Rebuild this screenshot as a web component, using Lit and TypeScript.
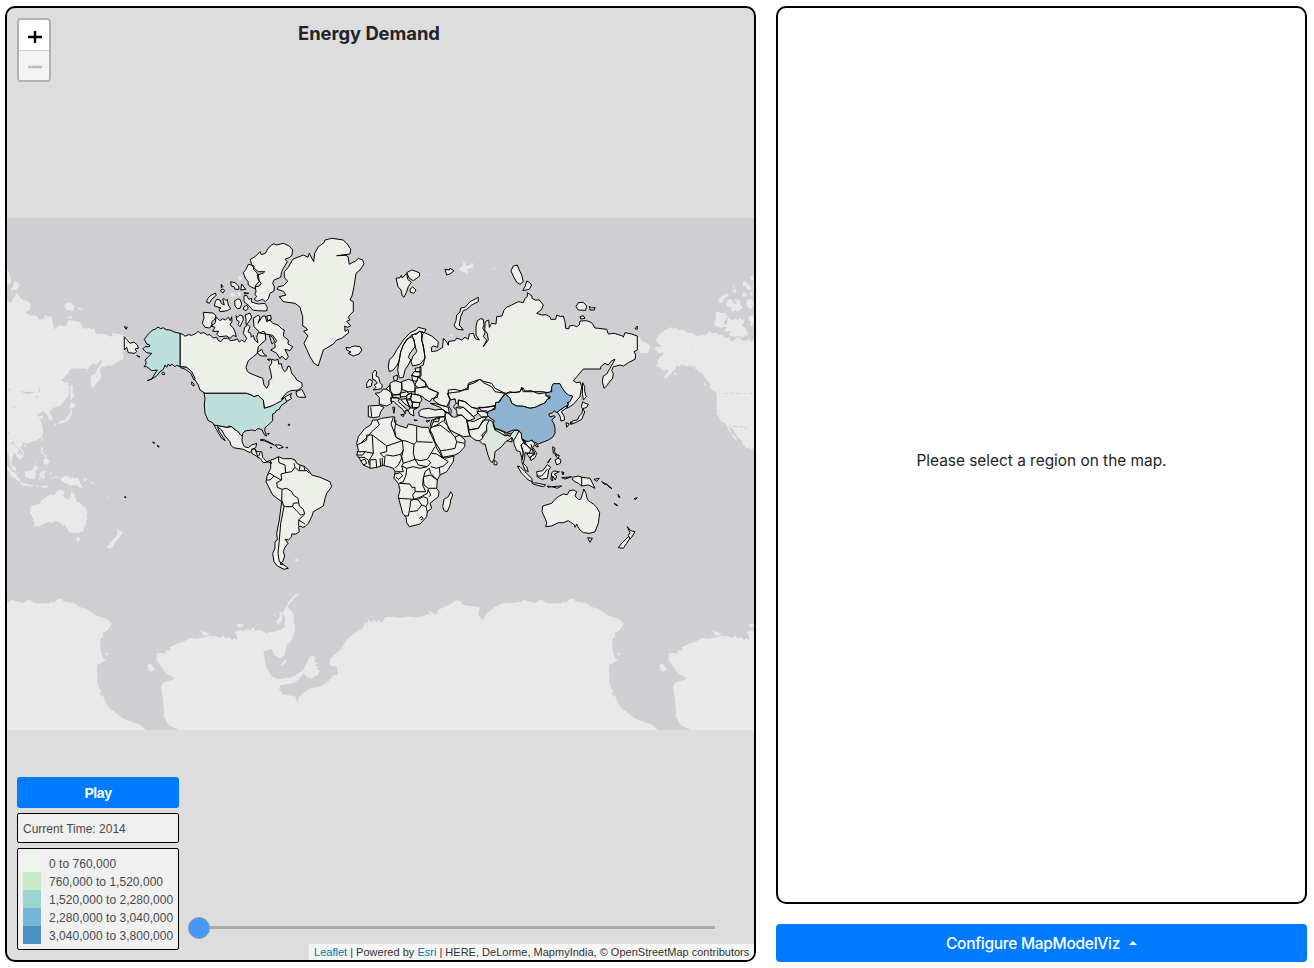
import { LitElement, html, svg, css } from "lit";
import { customElement, property } from "lit/decorators.js";

// Map sheets: each one is an origin on the map; coordinates are in thirds of a pixel.
const SHEETS: Record<string, [number, number]> = {
  a: [120, 230], b: [240, 230], c: [340, 320], d: [440, 250], e: [340, 400],
  f: [460, 370], g: [180, 380], h: [0, 570], i: [370, 570],
};

// `rough` adds small, repeatable notches to long edges, so coasts look natural.
function trace(src: string, close = true, rough = 0): string {
  let o = SHEETS.a;
  let out = "";
  for (const part of src.split(";")) {
    let px = NaN;
    let py = NaN;
    for (const t of part.trim().split(/\s+/)) {
      if (SHEETS[t]) { o = SHEETS[t]; continue; }
      if (!t) continue;
      const [tx, ty] = t.split(",").map(Number);
      const x = o[0] + tx / 3;
      const y = o[1] + ty / 3;
      if (Number.isNaN(px)) {
        out += `M${x.toFixed(1)} ${y.toFixed(1)}`;
      } else {
        const len = Math.hypot(x - px, y - py);
        const n = rough ? Math.floor(len / 1.6) : 0;
        for (let k = 1; k < n; k++) {
          const f = k / n;
          const bx = px + (x - px) * f;
          const by = py + (y - py) * f;
          const s = Math.sin(bx * 12.9898 + by * 78.233) * 43758.5453;
          const j = (s - Math.floor(s) - 0.5) * 2 * rough;
          out += `L${(bx - ((y - py) / len) * j).toFixed(1)} ${(by + ((x - px) / len) * j).toFixed(1)}`;
        }
        out += `L${x.toFixed(1)} ${y.toFixed(1)}`;
      }
      px = x;
      py = y;
    }
    if (close && !Number.isNaN(px)) out += "Z";
  }
  return out;
}

const US_POINTS = `a 114,291 122,296 130,293 138,299 150,300 165,307 180,310 180,410 170,406 165,410 155,402 150,408 145,402 140,412 135,405 130,418 120,425 110,438 95,447 82,452 96,446 104,432 112,420 95,422 80,410 72,410 78,402 78,395 75,390 88,378 95,370 80,368 68,357 75,350 88,350 90,346 80,342 73,328 85,312 98,300 106,298;
a 180,410 200,412 215,425 225,445 222,450 212,430 196,418 182,413;
g 72,40 200,40 215,46 222,50 235,46 242,54 250,60 253,85 275,78 290,70 305,62 309,56 315,52 320,66 310,72 302,78 298,88 288,92 286,98 278,102 278,122 268,132 255,143 254,152 260,168 254,166 249,156 245,148 232,146 226,152 215,150 195,153 189,160 187,168 181,164 175,155 167,150 155,140 145,138 142,142 120,138 102,135 98,128 85,122 75,100 73,75 75,55`;
const CHINA_POINTS = `f 136,72 143,78 150,85 155,100 170,108 190,109 210,115 226,112 240,105 256,98 262,88 270,85 270,79 257,77 258,68 275,65 275,50 280,41 300,41 305,52 318,70 326,75 338,78 330,95 322,98 325,105 312,112 300,120 290,128 283,122 278,128 266,132 270,141 282,137 286,140 275,150 282,162 285,175 285,190 278,202 265,210 250,216 235,222 222,216 215,210 205,215 195,212 185,205 184,190 175,180 160,180 140,188 122,180 105,175 100,160 103,152 90,144 82,135 85,124 105,118 107,97 118,97 125,85`;
const INDIA_POINTS = `f 88,150 98,155 100,165 105,180 120,188 136,198 142,196 150,200 155,190 165,180 177,183 168,200 160,212 156,202 146,210 138,214 125,230 112,240 105,245 103,265 97,278 90,272 83,252 75,222 68,222 58,212 65,208 72,195 80,185 80,165`;

const LAND_POINTS = `
a 180,310 190,314 195,319 205,314 215,316 225,312 235,304 240,310 252,308 262,315 270,314 280,324 290,322 294,331 302,335 310,326 325,324 330,332 345,330 352,326 358,336 365,330 374,336 380,325 370,310 374,292 384,284 390,290 384,305 392,310 394,322 400,316 404,330 414,338 410,322 414,308 436,312 437,330 420,345 415,350 412,370 400,380 385,392 378,412 382,424 390,430 410,438 428,445 432,465 440,475 447,462 446,452 455,445 452,425 448,410 455,400 455,388 465,391 474,388 476,402 484,401 487,415 494,425 500,420 504,408 510,410 516,432 525,440 530,450 545,458 547,470 535,480 512,482 500,488 490,500 484,508 500,498 515,490 510,500 516,505 498,515 485,520 470,528 455,528 433,535 430,510 422,504 415,496 402,500 395,496 380,490 255,490 240,480 235,465 225,450 215,430 200,412 180,410;
a 250,247 280,249 288,258 284,268 275,275 276,288 268,294 255,292 247,280 252,264;
a 288,262 294,266 300,272 308,266 316,270 325,262 331,272 335,260 336,275 330,285 340,294 345,305 349,320 340,316 330,325 320,318 298,320 290,312 296,304 278,304 285,292 272,288 285,280;
a 283,228 286,215 290,208 300,210 304,220 313,225 308,207 313,206 318,212 322,208 325,225 332,236 322,242 300,245 297,238 303,234;
a 260,217 262,208 270,198 286,189 289,196 275,208 268,220; a 304,163 309,170 304,173; a 301,183 306,177 314,181 309,189;
a 332,155 345,158 356,168 357,178 345,178 342,170 334,168; a 365,162 377,178 362,180; a 344,212 353,207 360,208 365,222 360,235 352,236 345,228; a 372,230 380,226 385,234 378,242 370,238;
a 372,188 386,190 374,192; a 372,197 380,196 386,208 395,205 394,216 415,222 435,220 442,232 440,243 412,242 398,240 388,228 372,215;
a 385,103 395,105 402,108 400,118 408,125 415,135 418,155 408,164 404,176 392,170 385,165 384,154 376,145 370,128 378,118;
a 455,45 462,41 470,45 490,40 508,48 518,60 516,75 510,82 495,88 502,95 490,115 485,125 482,142 462,150 458,160 463,170 462,183 450,190 445,206 436,215 428,208 412,214 402,208 410,200 404,192 408,186 406,170 418,168 424,160 415,150 412,135 430,129 434,125 415,125 406,118 395,105 391,88 405,80 420,65 424,74 436,70 444,55;
a 348,257 352,262 360,255 368,258 370,270 360,290 354,284 358,275 350,270; a 375,255 390,249 395,262 385,278 378,284 378,268;
a 400,265 415,255 420,262 414,280 428,258 436,258 440,275 450,270 458,280 474,285 485,296 493,300 490,318 505,330 504,342 518,350 510,362 495,358 505,380 498,390 485,378 480,386 470,370 452,360 466,352 464,340 470,332 458,316 437,312 432,304 420,308 402,290;
a 440,258 452,256 454,268 443,272;a 412,368 425,358 430,370 440,378 425,378 418,375; a 528,485 540,480 545,478 551,488 557,502 538,502 530,497;a 215,455 222,462 222,468 215,464; a 125,430 130,426 135,432 128,434;
a 13,320 20,328 30,340 42,336 52,345 55,355 45,357 50,364 45,370 25,368 20,352 13,360; a 13,290 22,292 18,298; a 50,376 60,381 54,380; a 442,388 452,387 448,392;
b 221,95 224,70 235,50 252,38 255,30 275,25 310,30 322,42 332,58 330,72 290,77 318,76 324,80 328,103 340,96 345,95 355,85 368,90 372,102 360,120 348,130 342,170 336,198 330,210 340,215 340,245 332,252 325,262 330,270 320,274 332,288 322,292 314,288 315,304 324,298 326,308 305,325 290,330 280,342 250,360 238,398 235,408 222,400 210,380 200,358 192,340 198,328 204,318 191,303 202,300 198,293 188,288 188,260 180,232 165,220 130,215 118,200 138,195 130,184 112,178 115,170 130,167 143,154 133,142 133,125 145,112 158,88 190,75 204,82 208,70 215,84;
b 318,352 330,354 335,350 345,348 360,350 366,360 357,372 340,378 325,370 333,366 320,360;
b 468,145 480,143 484,136 487,144 500,130 503,148 514,157 505,170 500,185 492,202 487,198 483,180 474,170; b 500,128 515,120 522,122 538,128 539,138 530,145 520,152 508,145; b 510,178 518,171 528,180 522,190 511,187;
d 15,58 28,60 30,55 42,62 30,72 20,75; d 220,48 232,45 238,60 245,75 250,95 240,103 230,97 218,75 213,62; d 260,93 268,97 275,105 268,118 248,122 256,108;
d 115,142 115,155 95,165 80,178 70,182 62,200 58,225 70,240 50,237 42,225 48,212 50,195 60,186 62,174 75,172 90,155; d 415,158 430,157 440,168 437,181 415,180 408,170; d 448,168 454,174 465,172 463,180 450,180; d 420,200 430,197 435,205 422,207; d 585,236 592,228 592,238;
d -55,245 -42,250 -25,258 -5,275 -7,292 -20,288 -26,292 -25,305 -8,302 8,292 10,265 20,276 25,286 26,274 45,272 50,264 65,270 75,262 85,268 88,252 100,250 106,266 118,270 108,255 108,230 112,212 122,206 130,208 132,225 128,235 136,246 130,260 140,270 130,290 145,270 142,250 134,240 136,215 146,210 148,232 155,220 168,222 170,200 186,198 192,180 200,172 215,165 235,155 250,158 255,145 262,140 262,128 276,138 276,145 285,150 298,150 310,165 305,178 290,190 305,195 318,194 330,200 332,208 347,208 350,195 362,200 370,198 375,215 377,235 386,237 388,228 400,226 410,230 418,225 420,213 440,212 455,218 465,234 475,235 500,238 505,252 522,250 548,258 550,262 555,248 575,252 592,258 592,300 582,305 587,315 585,328 565,338 550,348 540,345 520,350 515,362 520,370 518,385 505,400 502,406 492,415 487,395 490,378 500,372 510,355 525,328 515,332 505,345 495,340 482,350 482,357 430,357 415,375 400,392 410,398 420,396 425,410 420,440 398,465 380,475 383,460 398,440 375,435 358,402 340,403 330,430 310,425 250,425 245,412 240,425 195,430 165,425 155,410 130,398 120,388 85,400 85,412 60,425 22,430 30,450 20,470 0,465 -20,450 -10,435 -5,428 -35,415 -45,395 -60,385 -60,350 -50,345 -45,320 -48,300 -55,270;
d 428,398 434,410 434,425 439,440 430,450 427,430;
f 368,95 375,100 385,103 380,112 368,116 364,110; f 368,116 374,126 365,148 352,155 342,160 330,158 340,152 352,150 358,138 366,130; f 318,158 328,162 320,172; f 330,156 338,161 332,163;
f 290,124 305,117 325,100 322,112 304,125 312,138 314,150 303,153 300,138;
c 325,210 345,208 360,212 385,208 383,195 400,190 420,178 430,184 455,190 465,205 495,220 480,240 470,255 440,262 410,265 395,262 375,245 355,240 355,250 345,250 345,236 333,240 325,225;
c 148,120 160,108 170,90 190,60 210,38 228,30 235,22 258,28 252,40 240,33 230,40 215,45 205,55 200,60 190,75 182,95 178,120 172,135 160,150 148,155 145,140;
c 200,58 215,50 222,60 225,80 210,100 205,112 212,120 205,135 195,150 190,172 178,174 173,150 178,120 182,95 190,75;
c 215,45 230,42 240,33 248,45 245,60 250,75 253,100 255,115 240,133 218,138 213,125 218,110 230,95 226,80 222,60;
c 225,145 243,142 243,155 228,155; c 222,155 243,155 243,168 226,170 215,166; c 215,166 235,172 230,184 218,182;
c 235,170 245,180 255,185 258,200 235,203 224,195 230,184; c 225,205 260,200 268,206 295,218 292,232 275,236 270,245 255,238 248,230 225,222;
c 185,185 205,178 218,182 225,195 225,215 205,215 185,208; c 150,190 160,184 165,182 185,188 186,208 180,222 160,225 150,210; c 160,170 172,165 172,180 163,182;
c 105,150 110,156 108,168 116,172 120,188 127,195 125,206 100,210 108,202 102,195 112,190 105,180 98,178 97,160; c 80,190 88,178 97,182 94,198 80,203;
c 105,220 120,218 130,207 140,208 152,216 158,230 152,240 155,250 140,258 118,253 118,232; c 140,205 150,195 150,215 140,208; c 85,258 118,256 132,262 122,275 118,290 100,293 85,290;
c 152,232 170,232 178,237 174,244 182,252 205,272 195,272 196,282 188,268 172,255 162,244 154,246; c 182,284 193,283 190,290; c 158,262 164,262 162,280;
c 155,225 180,224 182,234 158,234; c 180,220 200,215 208,222 195,230 182,230; c 200,225 215,218 212,235 200,238; c 215,222 240,226 246,240 240,248 216,246 212,236; c 182,238 198,236 210,262 195,252; c 200,240 214,240 218,252 210,264; c 216,246 240,248 236,262 218,264; c 210,264 232,264 220,270 222,288 210,282 205,272; c 222,299 232,301 224,302; c 258,303 270,301 262,306;
c 236,275 245,268 265,265 285,270 300,268 312,270 318,280 312,290 280,292 262,294 238,288;c 270,250 290,252 325,262 328,280 312,272 300,262;
e 112,60 125,55 145,52 160,50 165,52 163,65 168,72 180,78 200,84 205,72 220,75 245,82 265,82 272,98 268,94 275,108 285,130 290,145 300,160 305,172 320,174 342,168 340,185 320,215 300,225 292,240 290,265 297,275 295,290 270,310 275,325 262,335 260,350 240,372 225,376 208,380 200,368 198,352 188,340 180,310 175,290 180,270 175,250 162,235 165,215 160,205 145,200 130,196 112,202 92,205 70,195 58,175 50,165 55,150 50,130 55,110 75,85 92,75 98,60;
e 332,275 338,285 332,300 330,315 322,335 312,332 308,320 312,298 325,290;
e 282,60 290,52 315,50 325,85 335,100 345,112 358,105 364,110 375,120 374,140 358,158 345,165 308,172 300,150 285,125 278,105 270,90;
c 315,275 328,282 335,290 350,288 365,285 380,300 385,330 390,348 370,350 345,338 330,330 322,315 312,305 316,290; c 380,300 400,305 430,290 440,292 425,310 415,325 388,330; c 390,348 385,330 415,325 430,300 448,300 452,308 440,330 425,345 432,360 415,362 405,360;
c 350,285 348,262 360,265 370,262 395,285 405,295 385,303 365,285; c 355,240 375,245 395,262 415,268 412,282 400,290 385,275 370,262 355,260; c 410,275 440,272 445,290 425,292; c 415,262 435,262 470,258 455,270 440,278 425,272;
f 136,72 150,65 165,68 180,65 188,53 195,63 215,62 235,71 258,68 262,80 270,85 262,88 256,98 240,105 226,112 210,115 190,109 170,108 155,100 150,85; f 105,175 135,188 135,197 105,183; f 140,190 156,190 154,195 142,196; f 138,198 155,203 156,216 148,214 140,212;
f 103,270 112,278 110,285 102,284; f 160,200 175,182 185,192 186,208 195,215 183,225 190,245 187,270 180,245 170,242 162,222; f 183,225 190,218 200,225 212,238 208,250 195,248 194,262 190,280 200,290 205,305 195,300 185,275 190,250;
f 195,214 208,210 217,212 225,222 218,232 230,250 226,262 213,272 210,262 225,252 222,244 200,225; f 200,250 222,250 210,265;
f 225,226 232,224 235,230 228,230; f 172,288 180,290 195,305 215,325 217,335 205,330 185,310; f 215,338 235,340 257,345 250,350 220,343; f 230,305 248,302 262,284 272,292 266,300 262,325 245,328 232,320;
f 275,308 282,303 298,305 282,313 290,318 286,330 278,318 278,332 273,330; f 338,322 355,318 365,322 390,325 405,355 385,345 365,348 355,340 345,335 338,330; f 278,230 285,235 283,245 292,255 280,250; f 285,270 295,265 303,270 301,280 290,285;f 285,255 298,256 295,266; f 262,278 272,265 266,277;
f 305,305 312,308 309,315; f 305,323 335,320 315,327; f 262,348 275,350 264,352; f 276,350 305,348 292,355;f 402,328 418,325 410,334; f 425,335 440,343 434,343; f 440,343 456,356 446,350; f 474,373 480,382 476,382; f 463,400 474,407 466,405; f 522,386 532,383 526,389;
f 298,378 310,372 322,374 328,362 340,360 350,365 345,378 355,388 362,388 368,370 371,357 378,370 380,382 385,392 400,402 410,412 419,428 415,460 405,485 390,490 370,488 360,480 353,470 350,462 345,472 343,464 325,452 310,458 295,458 275,468 257,470 260,458 255,445 246,425 248,408 275,400 285,388;
f 383,503 397,505 390,517; f 502,470 512,482 525,485 515,502 510,506 505,496 510,488; f 505,500 510,505 500,520 490,535 475,533 485,520;
g 102,135 120,138 142,142 155,140 167,150 175,155 187,168 186,185 193,200 205,203 215,195 230,190 227,203 218,207 210,218 190,208 160,203 152,195 150,185 135,168 125,150 112,140 118,155 136,182 125,175 115,158;
g 215,207 225,207 230,215 245,215 248,232 260,245 270,242 275,250 265,246 250,248 240,235 215,220; g 240,180 250,178 265,185 283,195 270,190 255,183; g 285,195 300,195 310,202 295,206;g 270,202 276,202 273,204; g 318,202 323,202 321,205; g 262,161 268,160 265,164; g 325,133 329,133 329,136 325,136;
g 272,240 285,236 295,230 310,236 335,236 345,240 350,250 360,255 375,260 385,270 395,285 420,292 450,305 455,320 440,340 436,352 430,378 400,395 395,410 385,430 375,440 368,442 360,438 356,442 358,455 348,462 335,462 335,470 325,480 315,478 324,490 315,502 310,515 314,528 308,545 300,552 312,555 325,565 312,568 292,558 282,545 278,520 285,505 285,485 292,480 290,460 298,420 305,365 278,345 258,305 262,285 272,265`;

const UNITED_STATES = trace(US_POINTS);
const CHINA = trace(CHINA_POINTS);
const INDIA = trace(INDIA_POINTS);
const LAND = trace(LAND_POINTS);
const TERRAIN = [LAND_POINTS, US_POINTS, CHINA_POINTS, INDIA_POINTS].map((p) => trace(p, true, 0.8));

const BORDERS = trace(`e 112,60 118,75 95,95 85,108 62,130 50,135; e 97,105 100,160 75,155 50,155; e 97,105 140,138 187,122 168,112 160,90 153,72 160,52; e 168,60 164,90 168,112 187,122 195,122 222,133 230,125 230,80; e 230,125 278,127;
e 97,105 80,105 80,120 62,130; e 140,138 140,155 120,160 132,172 140,165 160,168 182,163 190,150 187,122; e 190,150 185,170 190,190 205,185 225,178 220,160 222,133; e 225,178 240,182 262,178 270,165 285,140; e 225,178 235,195 262,200 272,188 265,180; e 275,160 290,162 305,172 325,185 310,198 290,205 272,200; e 268,205 272,220 292,240; e 300,225 298,202; e 190,190 185,198 200,205 220,200 240,205 262,200;
e 200,205 198,225 190,245 178,250 210,252 215,262 225,262 225,275 240,275 257,275 248,255 250,235 255,215 268,205; e 252,230 270,225 275,228 292,240; e 250,235 252,255 265,265 290,265; e 225,275 218,285 222,298 175,295; e 222,298 240,292 262,280 265,268; e 222,298 212,302 210,320 205,348 192,347; e 222,298 235,300 245,315 232,332 210,335; e 235,298 250,290 262,295 264,308 258,320 245,315; e 264,268 272,285 268,290; e 258,320 262,335; e 238,355 245,350 250,355 242,360;
e 90,205 90,180 108,178 110,203; e 122,198 120,175; e 127,197 127,173; e 132,197 135,172; e 88,180 100,160; e 50,165 68,165 75,155; e 55,172 72,172 85,180 88,195; e 62,182 75,178 80,190 70,195; e 182,163 185,175 175,195 165,205; e 165,215 190,215 185,198; e 165,222 180,218 188,228 175,238 168,232; e 280,80 300,75 330,98; e 345,112 350,125 372,130; e 350,125 345,145 320,150 302,152; e 270,85 290,75 310,62; e 280,65 295,65 300,50;
c 270,320 275,300 300,295; c 92,262 95,290;
g 305,360 312,380 302,430 298,480 294,520 298,545 310,552; g 306,328 305,362; g 295,230 297,248 315,255 317,278 303,282 305,300 290,308 292,322 306,328 320,325 335,335 340,345 354,355 356,368 340,370 338,380 316,380 308,375; g 260,300 270,300 282,288 270,280 262,285; g 282,288 303,300; g 317,278 335,275 345,262 342,250; g 345,262 355,272 380,272 388,280; g 360,255 358,270; g 372,260 375,272; g 356,368 358,378 370,388 374,402 362,405 352,395 338,380; g 372,404 356,420 356,440; g 356,420 375,432; g 225,207 235,235; g 240,218 236,228;
f 365,320 365,348; f 186,208 196,225; f 213,222 220,248; f 230,318 245,318 262,298`, false);

const INLETS = trace(`c 330,240 345,237 348,250 340,260 350,272 352,290 340,292 332,285 334,270 326,258; a 448,316 458,322 464,335 456,342 452,330`);
const ICE = trace(`h 535,480 505,465 492,440 490,400 483,350 490,338 523,327 510,315 505,316 490,300 470,270 470,250 485,248 495,252 500,240 510,242 508,230 525,225 560,210 572,204 590,207 620,200 640,197 665,204 668,195 676,204 690,202 696,210 704,205 712,210 710,195 704,186 718,180 728,183 740,178 752,181 760,172 764,181 780,180 800,190 812,185 818,187 830,183 845,178 855,170 855,145 848,130 852,120 870,90 885,75 905,65 885,82 862,110 880,130 885,180 875,210 860,225 855,255 840,265 825,258 815,238 790,245 798,290 812,315 825,325 840,328 885,318 910,300 930,260 938,258 948,264 942,275 956,280 944,285 960,290 948,295 960,302 955,315 935,325 920,320 910,310 895,330 880,340 840,345 838,360 850,375 885,378 893,395 898,380 910,370 930,355 960,350 985,335 1000,315 1013,315 1012,290 988,285 990,265 1020,240 1040,210 1060,190 1090,172 1094,156 1102,160 1105,148 1115,158 1120,148 1130,156 1140,150 i 35,158 45,142 75,140 90,144 110,140 140,142 180,132 175,122 200,135 203,120 225,108 240,105 255,92 270,92 280,105 330,112 325,135 337,153 350,130 375,110 400,100 455,96 462,87 468,93 495,98 515,89 530,100 575,100 583,94 588,100 594,90 610,86 615,93 650,100 665,110 690,120 700,125 715,138 745,146 762,160 750,180 735,188 736,200 727,210 727,235 735,265 745,268 718,285 718,340 730,365 724,375 735,378 750,410 770,425 800,448 845,462 862,480; h 442,285 452,280 464,300 452,305 445,298; h 842,285 858,270 860,274 846,288; h 600,180 612,185 632,192 612,198; h 708,162 732,162 728,170 715,172; h 828,155 840,140 838,125 848,130 846,155 835,165; h 312,250 328,250 320,258; h 820,132 828,130 826,140`, true, 0.35);
const SPECKS = trace(`d 55,58 70,45 72,32 80,48 100,40 98,55 80,58 85,70 68,66; d 160,54 168,56 162,59; a 355,140 362,135 366,146 358,152; a 330,192 342,188 344,200 334,200; a 352,190 362,186 360,200; f 278,200 284,205 280,216; f 54,552 64,554 60,557; g 344,538 356,540 346,544; c 328,45 338,42 336,52;d 207,42 212,45 209,50; b 556,130 566,132 560,135;g 212,284 218,286 214,288; d 592,258 610,275 628,290 625,305 610,302 592,296`, true, 0.8);
const ISLETS = trace(`a 98,636 104,638 102,641; a 112,646 118,650 114,651; a 14,800 17,800 17,803 14,803`);

const BANDS = [
  { color: "#edf6eb", label: "0 to 760,000" },
  { color: "#c9e8ca", label: "760,000 to 1,520,000" },
  { color: "#9bd5ce", label: "1,520,000 to 2,280,000" },
  { color: "#77b6d7", label: "2,280,000 to 3,040,000" },
  { color: "#4a90c0", label: "3,040,000 to 3,800,000" },
];

@customElement("world-map")
class WorldMap extends LitElement {
  static styles = css`
    :host { display: block; }
    svg { display: block; width: 747px; height: 952px; }
    .sea { fill: #cfced3; }
    .ground { fill: #e9e9e9; }
    .region { fill: #edf0e9; stroke: #000; stroke-width: 1; stroke-linejoin: round; }
    .line { fill: none; stroke: #000; stroke-width: 1; stroke-linejoin: round; }
    .inlet { fill: #cfced3; stroke: #111; stroke-width: 1; }
    .mid { fill: #bedfdb; }
    .high { fill: #8fb4d2; }
    .low { fill: #d9e8da; }
  `;
  render() {
    return html`<svg viewBox="7 8 747 952" aria-label="World map">
      <rect class="sea" x="7" y="218" width="747" height="512"></rect>
      ${[-512, 0, 512].map((dx) => svg`<g class="ground" transform="translate(${dx} 0)">
        ${TERRAIN.map((d) => svg`<path d=${d}></path>`)}
        <path d=${ICE}></path><path d=${SPECKS}></path></g>`)}
      <path class="region" d=${LAND}></path>
      <path class="line" d=${BORDERS}></path>
      <path class="region mid" d=${UNITED_STATES}></path>
      <path class="region low" d=${INDIA}></path>
      <path class="region high" d=${CHINA}></path>
      <path class="inlet" d=${INLETS}></path>
      <path class="region" d=${ISLETS}></path>
    </svg>`;
  }
}

@customElement("map-legend")
class MapLegend extends LitElement {
  static styles = css`
    :host { display: block; box-sizing: border-box; height: 102px; padding: 5px; border: 1px solid #000; border-radius: 2px; background: #f0f0f0; letter-spacing: 0.03px; }
    .row { display: flex; height: 18px; line-height: 20px; gap: 8px; white-space: nowrap; }
    .swatch { width: 18px; height: 18px; flex: none; }
  `;
  render() {
    return html`${BANDS.map((b) => html`<div class="row"><span class="swatch" style="background:${b.color}"></span><span>${b.label}</span></div>`)}`;
  }
}

@customElement("app-root")
class AppRoot extends LitElement {
  @property({ type: Number }) year = 2014;
  static styles = css`
    :host { display: flex; box-sizing: border-box; width: 1314px; height: 968px; padding: 6px 7px 6px 5px; gap: 20px; background: #fff; color: #212529; font-family: Inter, sans-serif; }
    .map { position: relative; box-sizing: border-box; width: 751px; height: 956px; border: 2px solid #000; border-radius: 10px; background: #ddd; overflow: hidden; flex: none; }
    .overlay { position: absolute; inset: 0; display: grid; grid-template-rows: 1fr auto; }
    .top { display: flex; align-items: flex-start; padding: 10px 10px 0; }
    .zoom { box-sizing: border-box; width: 34px; height: 64px; border: 2px solid #b1b1b1; border-radius: 4px; overflow: hidden; display: flex; flex-direction: column; background: #fff; }
    .zoom span { height: 30px; display: grid; place-items: center; box-sizing: border-box; }
    .zoom span + span { border-top: 1px solid #ccc; background: #f4f4f4; }
    .zoom svg { display: block; margin: 4px 0 0 2px; }
    .zoom span + span svg { margin-top: 2px; }
    h1 { margin: 3px 0 0 247px; font-size: 18.4px; line-height: 24px; font-weight: 700; letter-spacing: -0.04px; white-space: nowrap; }
    .bottom { display: grid; grid-template-columns: 162px 1fr; column-gap: 9px; padding: 0 0 0 10px; height: 183px; }
    .tools { display: flex; flex-direction: column; gap: 5px; font: 12px "Liberation Sans", sans-serif; color: #494949; }
    .play { height: 31px; border: 0; border-radius: 3px; background: #007bff; color: #fff; font: bold 14px/31px "Liberation Sans", sans-serif; letter-spacing: -0.4px; padding: 1px 0 0; }
    .time { box-sizing: border-box; height: 30px; border: 1px solid #000; border-radius: 2px; background: #f0f0f0; padding: 0 5px; line-height: 30px; }
    .side { display: flex; flex-direction: column; justify-content: flex-end; }
    .slider { display: flex; align-items: center; height: 22px; margin: 0 39px 5px 0; }
    .knob { box-sizing: border-box; width: 22px; height: 22px; border: 1px solid #8e9db0; border-radius: 50%; background: #4499f8; flex: none; }
    .track { height: 3px; background: #aaa; flex: 1; margin-bottom: 1px; }
    .credit { align-self: flex-end; box-sizing: border-box; width: 445px; height: 16px; padding: 0 5px; background: #f5f5f5; font: 11px/17px "Liberation Sans", sans-serif; letter-spacing: 0.01px; color: #333; white-space: nowrap; }
    .credit a { color: #0078a8; }
    .panel { display: flex; flex-direction: column; gap: 20px; width: 531px; }
    .detail { box-sizing: border-box; height: 898px; border: 2px solid #000; border-radius: 10px; display: grid; place-items: center; padding-top: 10px; font-size: 15.4px; }
    .configure { display: flex; align-items: center; justify-content: center; gap: 9px; height: 38px; border: 0; border-radius: 4px; background: #007bff; color: #fff; font: 500 15.5px Inter, sans-serif; letter-spacing: -0.28px; }
    .caret { border: 4px solid transparent; border-top: 0; border-bottom-color: #fff; }
  `;
  render() {
    return html`
      <section class="map">
        <world-map></world-map>
        <div class="overlay">
          <div class="top">
            <div class="zoom">
              <span><svg width="14" height="14"><path d="M0 7H14M7 1V13" stroke="#000" stroke-width="2.4"></path></svg></span>
              <span><svg width="14" height="14"><path d="M0 7H14" stroke="#bbb" stroke-width="2.4"></path></svg></span>
            </div>
            <h1>Energy Demand</h1>
          </div>
          <div class="bottom">
            <div class="tools">
              <button class="play">Play</button>
              <div class="time">Current Time: ${this.year}</div>
              <map-legend></map-legend>
            </div>
            <div class="side">
              <div class="slider"><span class="knob"></span><span class="track"></span></div>
              <div class="credit"><a>Leaflet</a> | Powered by <a>Esri</a> | HERE, DeLorme, MapmyIndia, © OpenStreetMap contributors</div>
            </div>
          </div>
        </div>
      </section>
      <section class="panel">
        <div class="detail">Please select a region on the map.</div>
        <button class="configure">Configure MapModelViz<span class="caret"></span></button>
      </section>`;
  }
}
